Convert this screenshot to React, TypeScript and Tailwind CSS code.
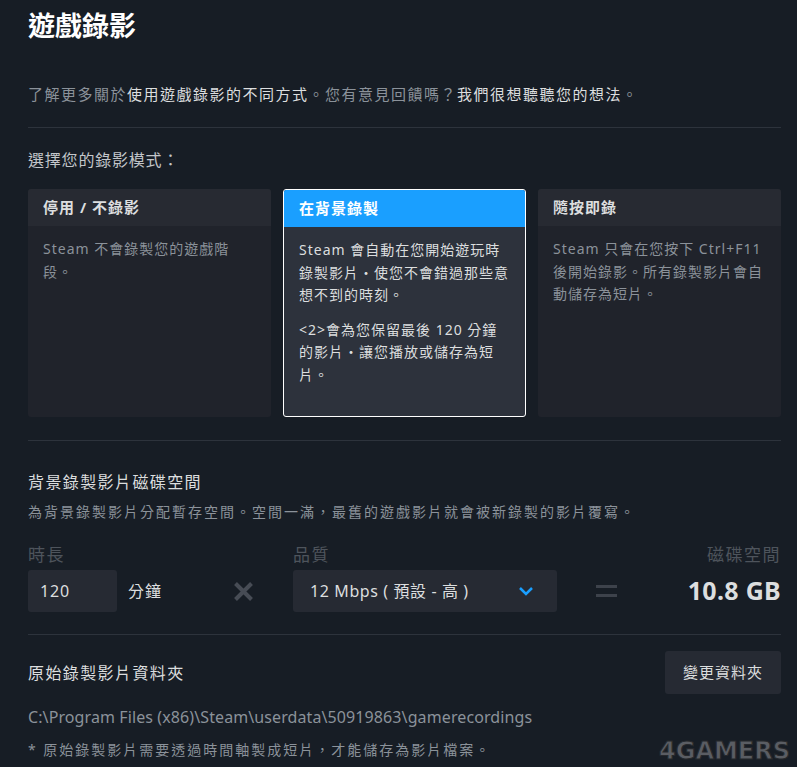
const font = { fontFamily: '"Noto Sans", "Noto Sans CJK TC", sans-serif' };

function ModeCard({ title, selected, children }: { title: string; selected?: boolean; children: React.ReactNode }) {
  return (
    <div
      className={`flex h-[228px] flex-col overflow-hidden rounded-[3px] ${
        selected ? 'border border-white bg-[#2d323c]' : 'bg-[#20232b]'
      }`}
    >
      <div
        className={`flex h-[37px] shrink-0 items-center px-[15px] text-[15px] font-bold tracking-[1px] ${
          selected ? 'bg-[#1a9fff] text-white' : 'bg-[#272a32] text-[#dcdedf]'
        }`}
      >
        {title}
      </div>
      <div className={`pl-[15px] pr-[8px] pt-[12px] text-[14px] leading-[22.5px] tracking-[1px] ${selected ? 'text-[#dcdedf]' : 'text-[#8b929a]'}`}>
        {children}
      </div>
    </div>
  );
}

export default function App() {
  return (
    <div lang="zh-Hant-TW" className="relative min-h-[767px] w-[797px] bg-[#171d25] pl-[28px] pr-[16px] text-[#dcdedf]" style={font}>
      <h1 className="pt-[8px] text-[27px] font-bold leading-[36px] text-white">遊戲錄影</h1>

      <p className="mt-[39px] text-[15px] leading-[22px] tracking-[1.5px] text-[#8b929a]">
        了解更多關於<span className="text-[#dcdedf]">使用遊戲錄影的不同方式</span>。您有意見回饋嗎？<span className="text-[#dcdedf]">我們很想聽聽您的想法</span>。
      </p>

      <div className="mt-[22px] h-px bg-[#2d333c]" />

      <p className="mt-[21px] text-[16px] leading-[22px] tracking-[0.8px] text-[#c3c6ca]">選擇您的錄影模式：</p>

      <div className="mt-[18px] grid grid-cols-3 gap-[12px]">
        <ModeCard title="停用 / 不錄影">
          <p className="pr-[10px]">Steam 不會錄製您的遊戲階段。</p>
        </ModeCard>
        <ModeCard title="在背景錄製" selected>
          <p className="pr-[6px]">Steam 會自動在您開始遊玩時錄製影片・使您不會錯過那些意想不到的時刻。</p>
          <p className="mt-[12px] pr-[14px]">&lt;2&gt;會為您保留最後 120 分鐘的影片・讓您播放或儲存為短片。</p>
        </ModeCard>
        <ModeCard title="隨按即錄">
          <p>Steam 只會在您按下 Ctrl+F11 後開始錄影。所有錄製影片會自動儲存為短片。</p>
        </ModeCard>
      </div>

      <div className="mt-[23px] h-px bg-[#2d333c]" />

      <p className="mt-[30px] text-[16px] leading-[22px] tracking-[1.4px] text-[#dcdedf]">背景錄製影片磁碟空間</p>
      <p className="mt-[9px] text-[14px] leading-[20px] tracking-[2px] text-[#8b929a]">為背景錄製影片分配暫存空間。空間一滿，最舊的遊戲影片就會被新錄製的影片覆寫。</p>

      <div className="mt-[21px] flex items-end">
        <div className="flex w-[205px] flex-col">
          <span className="text-[17px] leading-[24px] tracking-[1.5px] text-[#4e545c]">時長</span>
          <div className="mt-[3px] flex items-center">
            <div className="flex h-[42px] w-[89px] items-center rounded-[3px] bg-[#262a33] px-[12px] text-[16px] tracking-[0.8px] text-[#dcdedf]">120</div>
            <span className="ml-[11px] text-[16px] tracking-[1px] text-[#dcdedf]">分鐘</span>
          </div>
        </div>
        <div className="flex h-[42px] w-[21px] items-center justify-center">
          <svg width="21" height="21" viewBox="0 0 21 21">
            <path d="M2.5 2.5 L18.5 18.5 M18.5 2.5 L2.5 18.5" stroke="#474c55" strokeWidth="4" />
          </svg>
        </div>
        <div className="ml-[39px] flex flex-col">
          <span className="text-[17px] leading-[24px] tracking-[1.5px] text-[#4e545c]">品質</span>
          <div className="mt-[3px] flex h-[42px] w-[264px] items-center justify-between rounded-[3px] bg-[#262a33] pl-[17px] pr-[23px] text-[16px] tracking-[0.6px] text-[#dcdedf]">
            <span>12 Mbps ( 預設 - 高 )</span>
            <svg width="16" height="10" viewBox="0 0 16 10">
              <path d="M2 2 L8 8 L14 2" stroke="#1a9fff" strokeWidth="2.5" fill="none" />
            </svg>
          </div>
        </div>
        <div className="ml-[39px] flex h-[42px] w-[21px] items-center justify-center">
          <svg width="21" height="14" viewBox="0 0 21 14">
            <rect x="0" y="1" width="21" height="3" fill="#3d424b" />
            <rect x="0" y="10" width="21" height="3" fill="#3d424b" />
          </svg>
        </div>
        <div className="flex flex-1 flex-col items-end">
          <span className="text-[17px] leading-[24px] tracking-[1.5px] text-[#4e545c]">磁碟空間</span>
          <span className="mt-[3px] flex h-[42px] items-center text-[25px] font-bold tracking-[0.3px] text-[#dcdedf]">10.8 GB</span>
        </div>
      </div>

      <div className="mt-[22px] h-px bg-[#2d333c]" />

      <div className="mt-[16px] flex items-center justify-between">
        <span className="text-[16px] tracking-[1.4px] text-[#dcdedf]">原始錄製影片資料夾</span>
        <button className="flex h-[43px] w-[116px] items-center justify-center rounded-[3px] bg-[#262a33] text-[15px] tracking-[1px] text-[#dcdedf]">變更資料夾</button>
      </div>

      <p className="mt-[12px] text-[16px] leading-[22px] tracking-[0.1px] text-[#8b929a]">C:\Program Files (x86)\Steam\userdata\50919863\gamerecordings</p>
      <p className="mt-[11px] text-[14px] leading-[22px] tracking-[2px] text-[#8b929a]">* 原始錄製影片需要透過時間軸製成短片，才能儲存為影片檔案。</p>

      <div
        className="absolute bottom-[4px] right-[7px] text-[24px] font-black text-[#5a5d63]"
        style={{ fontFamily: '"DejaVu Sans", sans-serif', WebkitTextStroke: '1px #26282c', lineHeight: '24px' }}
      >
        4GAMERS
      </div>
    </div>
  );
}
